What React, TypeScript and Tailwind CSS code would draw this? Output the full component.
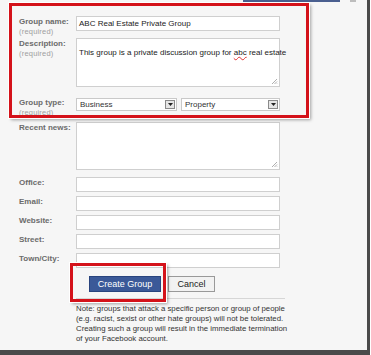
import React from "react";

const font = { fontFamily: '"Liberation Sans", Arial, sans-serif' };

function Label({ text, required }: { text: string; required?: boolean }) {
    return (
        <div className="w-[76px] h-[15px] shrink-0 pl-[19px] leading-none">
            <div className="text-[8px] font-bold text-[#6b6b6b] whitespace-nowrap pt-[2px]">{text}</div>
            {required && <div className="text-[7.5px] text-[#a0a0a0] mt-[2px] tracking-[0.2px] whitespace-nowrap">(required)</div>}
        </div>
    );
}

function Grip() {
    return (
        <svg className="absolute right-[1px] bottom-[1px]" width="7" height="7" viewBox="0 0 7 7">
            <path d="M6 1 L1 6 M6 3.5 L3.5 6 M6 5.5 L5.5 6" stroke="#9a9a9a" strokeWidth="0.8" />
        </svg>
    );
}

function Select({ value, width }: { value: string; width: string }) {
    return (
        <div className={`${width} h-[13px] bg-white border border-[#c9c9c9] flex items-center justify-between pl-[3px] pr-[1px] leading-none`}>
            <span className="text-[8px] text-[#333]">{value}</span>
            <span className="w-[10px] h-[9px] bg-[#e6e6e6] border border-[#8a8a8a] flex items-center justify-center">
                <svg width="5" height="3" viewBox="0 0 5 3"><path d="M0 0 L5 0 L2.5 3 Z" fill="#222" /></svg>
            </span>
        </div>
    );
}

function Field({ label }: { label: string }) {
    return (
        <div className="flex items-start mb-[4px]">
            <Label text={label} />
            <div className="w-[204px] h-[15px] bg-white border border-[#cfcfcf]" />
        </div>
    );
}

export default function App() {
    return (
        <div className="w-[371px] h-[355px] bg-white overflow-hidden" style={font}>
            <div className="relative w-[370px] h-[355px] bg-[#f6f6f6] border-r-[3px] border-b-[5px] border-[#4a4a4a]">
                <div className="flex h-[2px]">
                    <div className="ml-[243px] w-[97px] bg-[#4a5f8f]" />
                    <div className="ml-[10px] w-[6px] bg-[#bdbdbd]" />
                </div>

                <div className="pt-[14px]">
                    <div className="flex items-start mb-[7px]">
                        <Label text="Group name:" required />
                        <div className="w-[204px] h-[15px] bg-white border border-[#cfcfcf] flex items-center pl-[2px] leading-none">
                            <span className="text-[8px] text-[#222]">ABC Real Estate Private Group</span>
                        </div>
                    </div>
                    <div className="flex items-start mb-[10px]">
                        <Label text="Description:" required />
                        <div className="relative w-[204px] h-[49px] bg-white border border-[#cfcfcf] pl-[2px] pt-[3px] leading-none">
                            <span className="text-[8px] text-[#222] whitespace-nowrap">
                                This group is a private discussion group for{" "}
                                <span className="underline decoration-wavy decoration-[#e03030] decoration-[0.5px] underline-offset-1">abc</span> real estate
                            </span>
                            <Grip />
                        </div>
                    </div>
                    <div className="flex items-start mb-[10px]">
                        <Label text="Group type:" required />
                        <div className="flex gap-[4px] pt-px">
                            <Select value="Business" width="w-[101px]" />
                            <Select value="Property" width="w-[99px]" />
                        </div>
                    </div>
                    <div className="flex items-start mb-[7px]">
                        <Label text="Recent news:" />
                        <div className="relative w-[204px] h-[48px] bg-white border border-[#cfcfcf]">
                            <Grip />
                        </div>
                    </div>
                    <Field label="Office:" />
                    <Field label="Email:" />
                    <Field label="Website:" />
                    <Field label="Street:" />
                    <Field label="Town/City:" />

                    <div className="flex gap-[7px] pl-[89px] mt-[8px] leading-none">
                        <div className="w-[72px] h-[16px] bg-[#3b5998] border border-[#29447e] flex items-center justify-center text-[9px] text-white">
                            Create Group
                        </div>
                        <div className="w-[47px] h-[16px] bg-[#f2f2f2] border border-[#999] flex items-center justify-center text-[9px] text-[#222]">
                            Cancel
                        </div>
                    </div>

                    <div className="ml-[76px] w-[209px] h-px bg-[#d6d6d6] mt-[6px]" />
                    <p className="ml-[76px] mt-[5px] text-[7.8px] leading-[10px] text-[#333] whitespace-nowrap">
                        Note: groups that attack a specific person or group of people<br />
                        (e.g. racist, sexist or other hate groups) will not be tolerated.<br />
                        Creating such a group will result in the immediate termination<br />
                        of your Facebook account.
                    </p>
                </div>

                <div className="absolute left-[9px] top-[3px] w-[300px] h-[115px] border-[3px] border-[#d4121a] outline outline-1 outline-white shadow-[2px_2px_3px_rgba(0,0,0,0.35)]" />
                <div className="absolute left-[70px] top-[263px] w-[96px] h-[39px] border-[3px] border-[#d4121a] outline outline-1 outline-white shadow-[2px_2px_3px_rgba(0,0,0,0.35)]" />
            </div>
        </div>
    );
}
